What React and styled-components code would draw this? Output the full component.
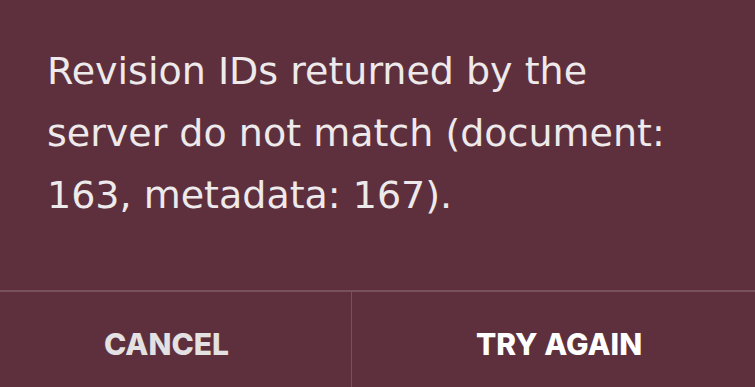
import React from "react";
import styled, { createGlobalStyle } from "styled-components";

const GlobalStyle = createGlobalStyle`
  html, body {
    margin: 0;
    padding: 0;
    background: #5e303d;
  }
`;

const Dialog = styled.div`
  width: 755px;
  height: 387px;
  display: flex;
  flex-direction: column;
  background: #5e303d;
  overflow: hidden;
`;

const Message = styled.p`
  margin: 0;
  padding: 40px 0 0 47px;
  width: 690px;
  height: 290px;
  box-sizing: border-box;
  font-family: "DejaVu Sans", "Noto Sans", sans-serif;
  font-size: 38px;
  line-height: 62px;
  color: #eeeaeb;
  font-weight: 400;
`;

const Actions = styled.div`
  display: flex;
  border-top: 2px solid #77525d;
  flex: 1;
`;

const ActionButton = styled.button`
  flex: ${p => (p.wide ? "0 0 403px" : "0 0 351px")};
  background: transparent;
  border: none;
  border-left: ${p => (p.wide ? "1px solid #77525d" : "none")};
  color: ${p => (p.primary ? "#ffffff" : "#e4e1e2")};
  font-family: "Inter", "Noto Sans", sans-serif;
  font-weight: 800;
  font-size: 30px;
  padding: ${p => (p.primary ? "8px 0 0 12px" : "8px 18px 0 0")};
  cursor: pointer;
`;

export default function App() {
  return (
    <>
      <GlobalStyle />
      <Dialog>
        <Message>
          Revision IDs returned by the server do not match (document: 163,
          metadata: 167).
        </Message>
        <Actions>
          <ActionButton>CANCEL</ActionButton>
          <ActionButton wide primary>
            TRY AGAIN
          </ActionButton>
        </Actions>
      </Dialog>
    </>
  );
}
